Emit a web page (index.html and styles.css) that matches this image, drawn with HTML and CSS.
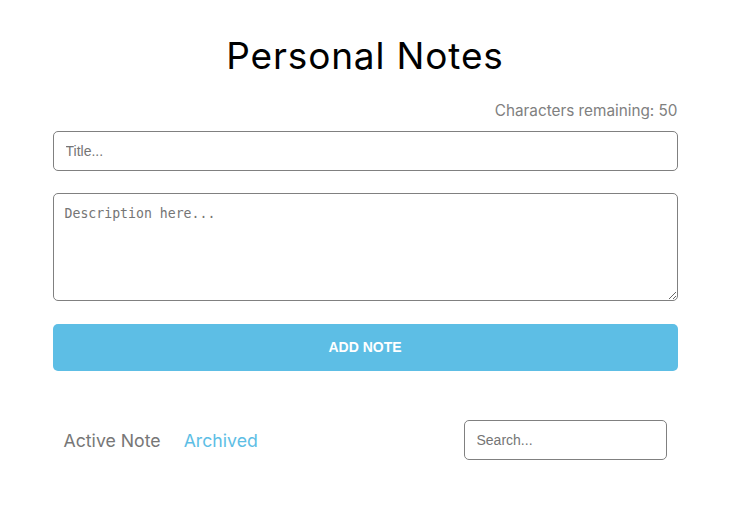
FILE: index.html
```html
<!DOCTYPE html>
<html>
<head>
<meta charset="utf-8">
<link rel="stylesheet" href="styles.css">
</head>
<body>
<div class="page">
  <main class="container">
    <h1 class="title">Personal Notes</h1>
    <p class="remaining">Characters remaining: 50</p>
    <input class="field title-input" type="text" placeholder="Title...">
    <textarea class="field desc" placeholder="Description here..."></textarea>
    <button class="add-btn">ADD NOTE</button>
    <div class="toolbar">
      <div class="tabs">
        <span class="tab">Active Note</span>
        <span class="tab tab-active">Archived</span>
      </div>
      <input class="field search" type="text" placeholder="Search...">
    </div>
  </main>
</div>
</body>
</html>
```

FILE: styles.css
```css
* { box-sizing: border-box; }
html, body { margin: 0; padding: 0; background: #fff; }
body { font-family: Inter, "Noto Sans", sans-serif; }
.page { width: 730px; }
.container {
  width: 625px;
  margin: 0 auto;
  padding-top: 34px;
  display: flex;
  flex-direction: column;
}
.title {
  margin: 0;
  font-size: 37px;
  letter-spacing: 0.85px;
  font-weight: 400;
  text-align: center;
  color: #000;
  line-height: 44px;
}
.remaining {
  margin: 24px 0 0;
  text-align: right;
  font-size: 15.3px;
  line-height: 18px;
  color: #808080;
}
.field {
  border: 1px solid #808080;
  border-radius: 5px;
  outline: none;
  background: #fff;
  color: #333;
}
.field::placeholder { color: #757575; }
.title-input {
  margin-top: 11px;
  height: 40px;
  padding: 0 12px;
  font-family: "Liberation Sans", Arial, sans-serif;
  font-size: 14px;
}
.desc {
  margin-top: 22px;
  height: 108px;
  padding: 12px 11px;
  font-family: "DejaVu Sans Mono", monospace;
  font-size: 13.2px;
  resize: vertical;
}
.add-btn {
  margin-top: 23px;
  height: 47px;
  padding: 0 0 2px;
  border: none;
  border-radius: 5px;
  background: #5dbee5;
  color: #fff;
  font-family: "Liberation Sans", Arial, sans-serif;
  font-weight: 700;
  font-size: 14px;
}
.toolbar {
  margin-top: 49px;
  display: flex;
  align-items: center;
  justify-content: space-between;
  padding: 0 11px;
}
.tabs { display: flex; gap: 23px; }
.tab {
  font-size: 17.7px;
  color: #777;
}
.tab-active { color: #5dbee5; }
.search {
  width: 203px;
  height: 40px;
  padding: 0 12px;
  font-family: "Liberation Sans", Arial, sans-serif;
  font-size: 14px;
}
```
